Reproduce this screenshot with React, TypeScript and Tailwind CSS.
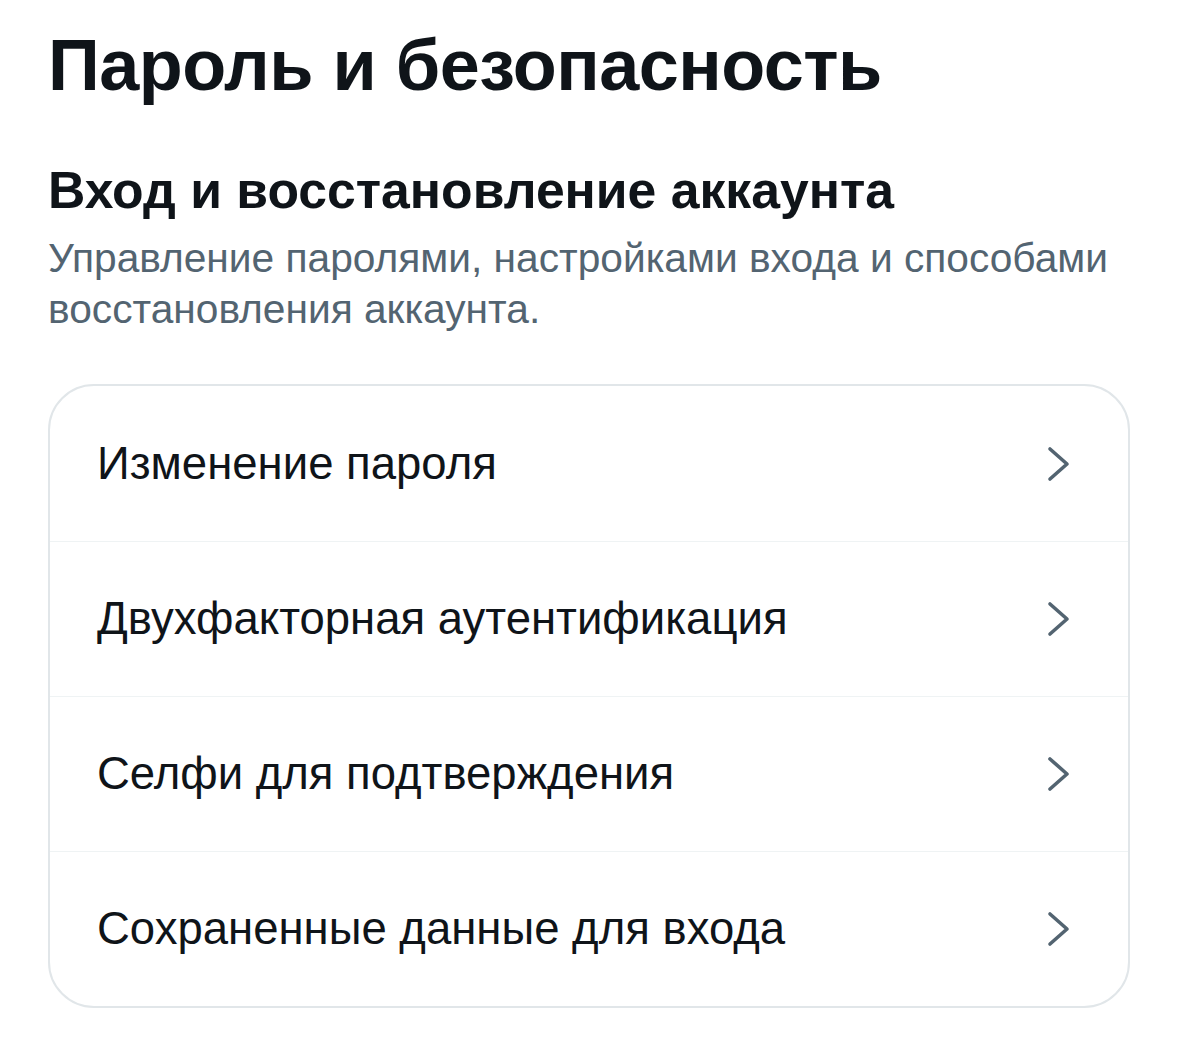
const ITEMS = [
  'Изменение пароля',
  'Двухфакторная аутентификация',
  'Селфи для подтверждения',
  'Сохраненные данные для входа',
];

function Chevron() {
  return (
    <svg width="26" height="36" viewBox="0 0 26 36" fill="none" className="shrink-0">
      <path d="M4 3 L21 18 L4 33" stroke="#536471" strokeWidth="3.6" strokeLinecap="round" strokeLinejoin="round" />
    </svg>
  );
}

export default function App() {
  return (
    <div className="min-h-screen bg-white text-[#0f1419] px-[48px] pt-[29px] font-['Liberation_Sans',Arial,sans-serif]">
      {/* Page title */}
      <h1 className="text-[72px] leading-none font-bold tracking-[-0.5px]">Пароль и безопасность</h1>

      {/* Section header */}
      <div className="mt-[59px]">
        <h2 className="text-[51.7px] leading-[60px] font-bold">Вход и восстановление аккаунта</h2>
        <p className="mt-[13px] text-[40.7px] leading-[51px] text-[#536471]">
          Управление паролями, настройками входа и способами восстановления аккаунта.
        </p>
      </div>

      {/* Settings list */}
      <div className="mt-[49px] w-[1082px] rounded-[46px] border-2 border-[#e1e6e9] overflow-hidden">
        {ITEMS.map((label, i) => (
          <button
            key={label}
            className={`w-full h-[155px] flex items-center justify-between pl-[47px] pr-[56px] text-left ${
              i > 0 ? 'border-t border-[#eff3f4]' : ''
            }`}
          >
            <span className="text-[45.5px] leading-none">{label}</span>
            <Chevron />
          </button>
        ))}
      </div>
    </div>
  );
}
